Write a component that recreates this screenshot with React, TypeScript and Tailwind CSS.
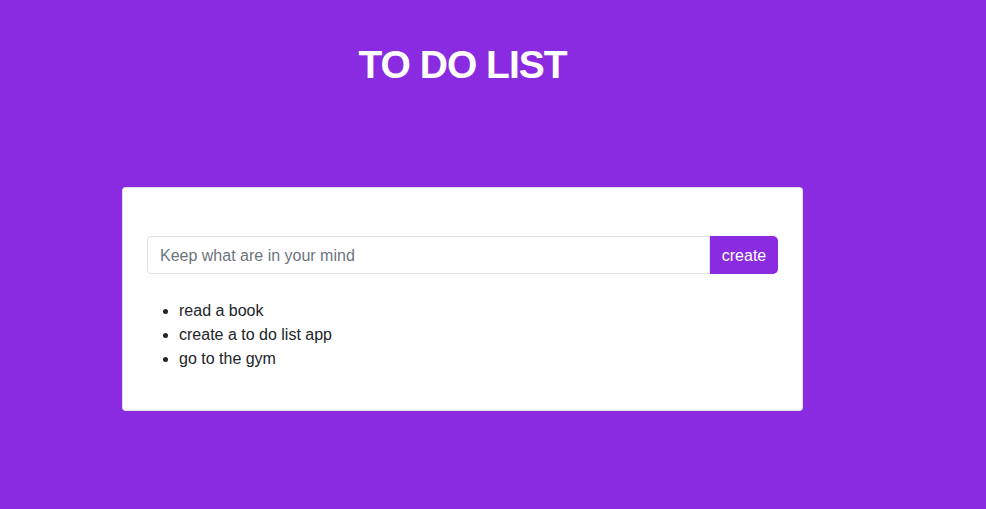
import { useState } from 'react';

const initialItems = ['read a book', 'create a to do list app', 'go to the gym'];

export default function App() {
  const [items, setItems] = useState<string[]>(initialItems);
  const [text, setText] = useState('');

  function addItem() {
    if (!text.trim()) return;
    setItems([...items, text]);
    setText('');
  }

  return (
    <div
      className="min-h-[509px] w-full bg-[#8a2be2] pt-[37px]"
      style={{ fontFamily: '"Liberation Sans", Arial, sans-serif' }}
    >
      <div className="ml-[122px] w-[681px]">
        <h1 className="text-center text-[39px] font-bold leading-[56px] tracking-[-1px] text-white">
          TO DO LIST
        </h1>

        <div className="mt-[94px] rounded-[4px] border border-[rgba(0,0,0,0.125)] bg-white px-[24px] pb-[39px] pt-[48px]">
          <div className="flex h-[38px]">
            <input
              className="h-full flex-1 rounded-l-[4px] border border-[#dee2e6] px-[12px] pt-[1px] text-[16px] text-[#495057] outline-none placeholder:text-[#6c757d]"
              placeholder="Keep what are in your mind"
              value={text}
              onChange={(e) => setText(e.target.value)}
            />
            <button
              className="h-full w-[68px] rounded-r-[5px] bg-[#8a2be2] pt-[1px] text-[16px] text-white"
              onClick={addItem}
            >
              create
            </button>
          </div>

          <ul className="mt-[25px] list-disc pl-[32px] text-[16px] leading-[24px] text-[#212529]">
            {items.map((item, idx) => (
              <li key={idx}>{item}</li>
            ))}
          </ul>
        </div>
      </div>
    </div>
  );
}
